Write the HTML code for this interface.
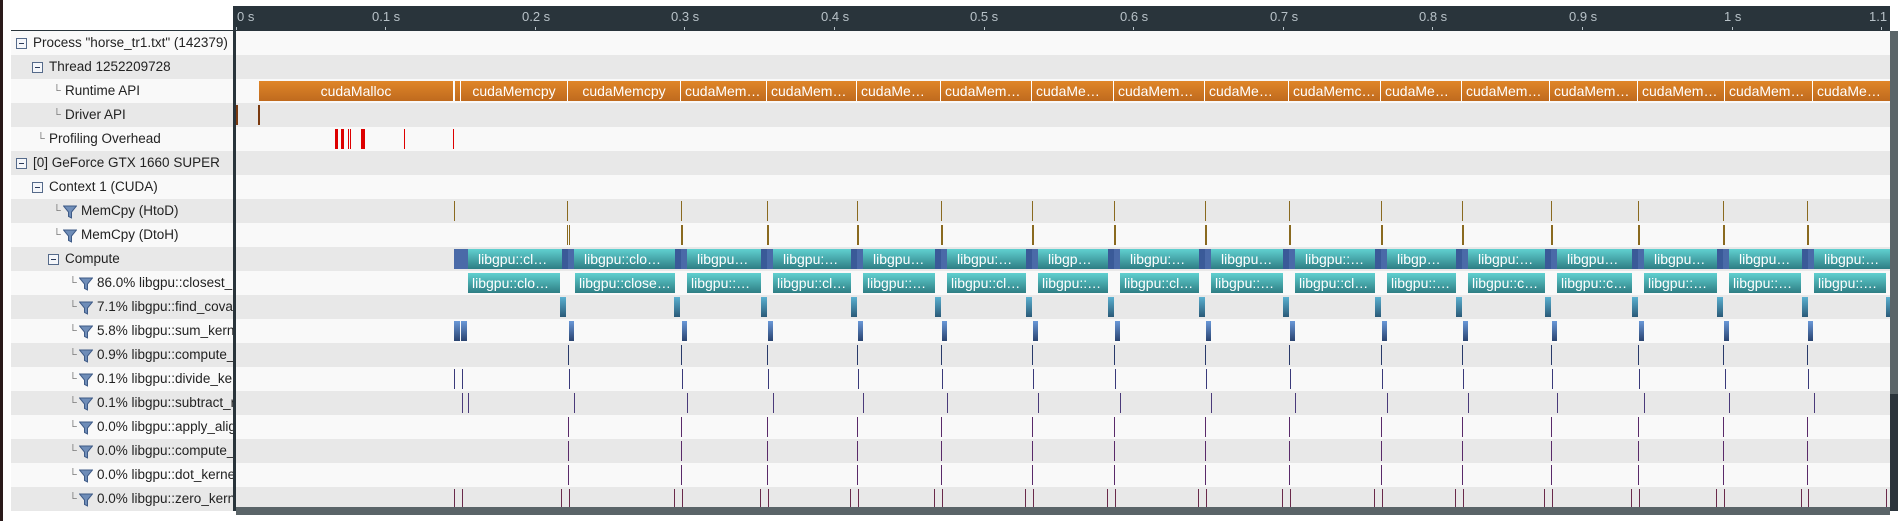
<!DOCTYPE html>
<html><head><meta charset="utf-8"><style>
*{margin:0;padding:0;box-sizing:border-box}
body{width:1903px;height:521px;overflow:hidden;background:#fff;position:relative;font-family:"Liberation Sans","DejaVu Sans",sans-serif;font-size:14px;color:#222}
div{position:absolute}
svg{position:absolute}
.row{left:11px;width:1879px;height:24px}
.l{background:#f9f9f9}.g{background:#e8e8e8}
.t{white-space:nowrap;line-height:24px;height:24px;font-size:13.5px}
.bx{width:11px;height:11px;border:1px solid #556a8a;background:#f4f6fa}
.bx:after{content:"";position:absolute;left:2px;top:4px;width:5px;height:1px;background:#2a3a5a}
.cr{color:#777;font-size:11px}
.rb{top:81px;height:20px;background:linear-gradient(#e08628,#bf6a1e);color:#fff;text-align:center;line-height:20px;overflow:hidden;text-overflow:ellipsis;white-space:nowrap;padding:0 4px;border-right:1px solid #fff}
.cb{top:249px;height:20px;background:linear-gradient(#60d0d0,#2e7e84);color:#fff;line-height:20px;overflow:hidden;text-overflow:ellipsis;white-space:nowrap;padding:0 10px;border-left:6px solid #4a6aa8;border-right:6px solid #3a5a98;text-align:center}
.kb{top:273px;height:20px;background:linear-gradient(#60d0d0,#2e7e84);color:#fff;line-height:20px;overflow:hidden;text-overflow:ellipsis;white-space:nowrap;padding:0 4px;text-align:center}
.fc{top:297px;height:20px;width:6px;background:linear-gradient(#5ab0d0,#2a5a78)}
.sk{top:321px;height:20px;width:5px;background:linear-gradient(#6a98d8,#2a4470)}
.ln{width:1px;height:20px}
.rl{top:3px;white-space:nowrap}
.tk{width:1px;height:3px;background:#b8c2c8;top:21px}
</style></head><body>
<svg width="0" height="0"><defs><symbol id="f" viewBox="0 0 14 14"><path d="M0.5 1 H13.5 L8.5 7 V13 L5.5 11.5 V7 Z" fill="#6f8db8" stroke="#3e5a86" stroke-width="1"/></symbol></defs></svg>
<div style="left:0;top:0;width:3px;height:521px;background:#2a1a1a"></div>
<div style="left:236px;top:6px;width:1654px;height:25px;background:#29343b"></div>
<div style="left:11px;top:30px;width:222px;height:1px;background:#29343b"></div>
<!-- ruler labels -->
<div style="left:0;top:6px;width:1890px;height:25px;color:#b8c2c8;font-size:13px;overflow:hidden">
<div class="rl" style="left:237px">0 s</div>
<div class="rl" style="left:372px">0.1 s</div>
<div class="rl" style="left:522px">0.2 s</div>
<div class="rl" style="left:671px">0.3 s</div>
<div class="rl" style="left:821px">0.4 s</div>
<div class="rl" style="left:970px">0.5 s</div>
<div class="rl" style="left:1120px">0.6 s</div>
<div class="rl" style="left:1270px">0.7 s</div>
<div class="rl" style="left:1419px">0.8 s</div>
<div class="rl" style="left:1569px">0.9 s</div>
<div class="rl" style="left:1724px">1 s</div>
<div class="rl" style="left:1869px">1.1 s</div>
<div class="tk" style="left:236px"></div><div class="tk" style="left:385px"></div><div class="tk" style="left:535px"></div><div class="tk" style="left:684px"></div><div class="tk" style="left:834px"></div><div class="tk" style="left:984px"></div><div class="tk" style="left:1133px"></div><div class="tk" style="left:1283px"></div><div class="tk" style="left:1432px"></div><div class="tk" style="left:1582px"></div><div class="tk" style="left:1732px"></div><div class="tk" style="left:1881px"></div>
</div>
<!-- rows -->
<div class="row l" style="top:31px"></div><div class="row g" style="top:55px"></div>
<div class="row l" style="top:79px"></div><div class="row g" style="top:103px"></div>
<div class="row l" style="top:127px"></div><div class="row g" style="top:151px"></div>
<div class="row l" style="top:175px"></div><div class="row g" style="top:199px"></div>
<div class="row l" style="top:223px"></div><div class="row g" style="top:247px"></div>
<div class="row l" style="top:271px"></div><div class="row g" style="top:295px"></div>
<div class="row l" style="top:319px"></div><div class="row g" style="top:343px"></div>
<div class="row l" style="top:367px"></div><div class="row g" style="top:391px"></div>
<div class="row l" style="top:415px"></div><div class="row g" style="top:439px"></div>
<div class="row l" style="top:463px"></div><div class="row g" style="top:487px"></div>
<div style="left:233px;top:6px;width:3px;height:509px;background:#29343b"></div>
<!-- labels -->
<div style="left:0;top:0;width:233px;height:521px;overflow:hidden">
<div class="bx" style="left:16px;top:38px"></div><div class="t" style="left:33px;top:31px">Process "horse_tr1.txt" (142379)</div>
<div class="bx" style="left:32px;top:62px"></div><div class="t" style="left:49px;top:55px">Thread 1252209728</div>
<div class="t cr" style="left:53px;top:79px">└</div><div class="t" style="left:65px;top:79px">Runtime API</div>
<div class="t cr" style="left:53px;top:103px">└</div><div class="t" style="left:65px;top:103px">Driver API</div>
<div class="t cr" style="left:37px;top:127px">└</div><div class="t" style="left:49px;top:127px">Profiling Overhead</div>
<div class="bx" style="left:16px;top:158px"></div><div class="t" style="left:33px;top:151px">[0] GeForce GTX 1660 SUPER</div>
<div class="bx" style="left:32px;top:182px"></div><div class="t" style="left:49px;top:175px">Context 1 (CUDA)</div>
<div class="t cr" style="left:53px;top:199px">└</div><svg width="14" height="14" style="left:63px;top:205px"><use href="#f"/></svg><div class="t" style="left:81px;top:199px">MemCpy (HtoD)</div>
<div class="t cr" style="left:53px;top:223px">└</div><svg width="14" height="14" style="left:63px;top:229px"><use href="#f"/></svg><div class="t" style="left:81px;top:223px">MemCpy (DtoH)</div>
<div class="bx" style="left:48px;top:254px"></div><div class="t" style="left:65px;top:247px">Compute</div>
<div class="t cr" style="left:69px;top:271px">└</div><svg width="14" height="14" style="left:79px;top:277px"><use href="#f"/></svg><div class="t" style="left:97px;top:271px">86.0% libgpu::closest_k...</div>
<div class="t cr" style="left:69px;top:295px">└</div><svg width="14" height="14" style="left:79px;top:301px"><use href="#f"/></svg><div class="t" style="left:97px;top:295px">7.1% libgpu::find_cova...</div>
<div class="t cr" style="left:69px;top:319px">└</div><svg width="14" height="14" style="left:79px;top:325px"><use href="#f"/></svg><div class="t" style="left:97px;top:319px">5.8% libgpu::sum_kern...</div>
<div class="t cr" style="left:69px;top:343px">└</div><svg width="14" height="14" style="left:79px;top:349px"><use href="#f"/></svg><div class="t" style="left:97px;top:343px">0.9% libgpu::compute_...</div>
<div class="t cr" style="left:69px;top:367px">└</div><svg width="14" height="14" style="left:79px;top:373px"><use href="#f"/></svg><div class="t" style="left:97px;top:367px">0.1% libgpu::divide_ker...</div>
<div class="t cr" style="left:69px;top:391px">└</div><svg width="14" height="14" style="left:79px;top:397px"><use href="#f"/></svg><div class="t" style="left:97px;top:391px">0.1% libgpu::subtract_r...</div>
<div class="t cr" style="left:69px;top:415px">└</div><svg width="14" height="14" style="left:79px;top:421px"><use href="#f"/></svg><div class="t" style="left:97px;top:415px">0.0% libgpu::apply_alig...</div>
<div class="t cr" style="left:69px;top:439px">└</div><svg width="14" height="14" style="left:79px;top:445px"><use href="#f"/></svg><div class="t" style="left:97px;top:439px">0.0% libgpu::compute_...</div>
<div class="t cr" style="left:69px;top:463px">└</div><svg width="14" height="14" style="left:79px;top:469px"><use href="#f"/></svg><div class="t" style="left:97px;top:463px">0.0% libgpu::dot_kerne...</div>
<div class="t cr" style="left:69px;top:487px">└</div><svg width="14" height="14" style="left:79px;top:493px"><use href="#f"/></svg><div class="t" style="left:97px;top:487px">0.0% libgpu::zero_kern...</div>
</div>
<!-- runtime -->
<div class="rb" style="left:259px;width:195px">cudaMalloc</div>
<div class="rb" style="left:455px;width:6px;padding:0"></div>
<div class="rb" style="left:461px;width:107px">cudaMemcpy</div>
<div class="rb" style="left:568px;width:113px">cudaMemcpy</div>
<div class="rb" style="left:681px;width:86px">cudaMemcpy</div>
<div class="rb" style="left:767px;width:90px">cudaMemcpy</div>
<div class="rb" style="left:857px;width:84px">cudaMemcpy</div>
<div class="rb" style="left:941px;width:91px">cudaMemcpy</div>
<div class="rb" style="left:1032px;width:82px">cudaMemcpy</div>
<div class="rb" style="left:1114px;width:91px">cudaMemcpy</div>
<div class="rb" style="left:1205px;width:84px">cudaMemcpy</div>
<div class="rb" style="left:1289px;width:92px">cudaMemcpy</div>
<div class="rb" style="left:1381px;width:81px">cudaMemcpy</div>
<div class="rb" style="left:1462px;width:88px">cudaMemcpy</div>
<div class="rb" style="left:1550px;width:88px">cudaMemcpy</div>
<div class="rb" style="left:1638px;width:87px">cudaMemcpy</div>
<div class="rb" style="left:1725px;width:88px">cudaMemcpy</div>
<div class="rb" style="left:1813px;width:77px;border:0">cudaMemcpy</div>
<!-- driver -->
<div style="left:236px;top:105px;width:2px;height:20px;background:#7a3a10"></div>
<div style="left:258px;top:105px;width:2px;height:20px;background:#7a3a10"></div>
<!-- profiling -->
<div style="left:335px;top:129px;width:3px;height:20px;background:#dd0000"></div>
<div style="left:341px;top:129px;width:3px;height:20px;background:#dd0000"></div>
<div style="left:348px;top:129px;width:1px;height:20px;background:#dd0000"></div>
<div style="left:350px;top:129px;width:1px;height:20px;background:#dd0000"></div>
<div style="left:361px;top:129px;width:4px;height:20px;background:#dd0000"></div>
<div style="left:404px;top:129px;width:1px;height:20px;background:#dd0000"></div>
<div style="left:453px;top:129px;width:1px;height:20px;background:#dd0000"></div>
<!-- HtoD / DtoH -->
<div style="left:0;top:201px;width:1903px;height:20px">
<div class="ln" style="left:454px;background:#8a6a20"></div><div class="ln" style="left:567px;background:#8a6a20"></div><div class="ln" style="left:681px;background:#8a6a20"></div><div class="ln" style="left:767px;background:#8a6a20"></div><div class="ln" style="left:857px;background:#8a6a20"></div><div class="ln" style="left:941px;background:#8a6a20"></div><div class="ln" style="left:1032px;background:#8a6a20"></div><div class="ln" style="left:1114px;background:#8a6a20"></div><div class="ln" style="left:1205px;background:#8a6a20"></div><div class="ln" style="left:1289px;background:#8a6a20"></div><div class="ln" style="left:1381px;background:#8a6a20"></div><div class="ln" style="left:1462px;background:#8a6a20"></div><div class="ln" style="left:1551px;background:#8a6a20"></div><div class="ln" style="left:1638px;background:#8a6a20"></div><div class="ln" style="left:1723px;background:#8a6a20"></div><div class="ln" style="left:1807px;background:#8a6a20"></div>
</div>
<div style="left:0;top:225px;width:1903px;height:20px">
<div class="ln" style="left:567px;background:#8a6a20"></div><div class="ln" style="left:569px;background:#8a6a20"></div><div class="ln" style="left:681px;width:2px;background:#8a6a20"></div><div class="ln" style="left:767px;width:2px;background:#8a6a20"></div><div class="ln" style="left:857px;width:2px;background:#8a6a20"></div><div class="ln" style="left:941px;width:2px;background:#8a6a20"></div><div class="ln" style="left:1032px;width:2px;background:#8a6a20"></div><div class="ln" style="left:1114px;width:2px;background:#8a6a20"></div><div class="ln" style="left:1205px;width:2px;background:#8a6a20"></div><div class="ln" style="left:1289px;width:2px;background:#8a6a20"></div><div class="ln" style="left:1381px;width:2px;background:#8a6a20"></div><div class="ln" style="left:1462px;width:2px;background:#8a6a20"></div><div class="ln" style="left:1551px;width:2px;background:#8a6a20"></div><div class="ln" style="left:1638px;width:2px;background:#8a6a20"></div><div class="ln" style="left:1723px;width:2px;background:#8a6a20"></div><div class="ln" style="left:1807px;width:2px;background:#8a6a20"></div>
</div>
<!-- compute -->
<div class="cb" style="left:454px;width:114px;border-left:14px solid #4a6aa8">libgpu::closest_kernel</div>
<div class="cb" style="left:568px;width:113px">libgpu::closest_kernel</div>
<div class="cb" style="left:681px;width:86px">libgpu::closest_kernel</div>
<div class="cb" style="left:767px;width:90px">libgpu::closest_kernel</div>
<div class="cb" style="left:857px;width:84px">libgpu::closest_kernel</div>
<div class="cb" style="left:941px;width:91px">libgpu::closest_kernel</div>
<div class="cb" style="left:1032px;width:82px">libgpu::closest_kernel</div>
<div class="cb" style="left:1114px;width:91px">libgpu::closest_kernel</div>
<div class="cb" style="left:1205px;width:84px">libgpu::closest_kernel</div>
<div class="cb" style="left:1289px;width:92px">libgpu::closest_kernel</div>
<div class="cb" style="left:1381px;width:81px">libgpu::closest_kernel</div>
<div class="cb" style="left:1462px;width:89px">libgpu::closest_kernel</div>
<div class="cb" style="left:1551px;width:87px">libgpu::closest_kernel</div>
<div class="cb" style="left:1638px;width:85px">libgpu::closest_kernel</div>
<div class="cb" style="left:1723px;width:85px">libgpu::closest_kernel</div>
<div class="cb" style="left:1808px;width:82px;border-right:0">libgpu::closest_kernel</div>
<!-- 86% -->
<div class="kb" style="left:468px;width:92px">libgpu::closest_kernel</div>
<div class="kb" style="left:575px;width:100px">libgpu::closest_kernel</div>
<div class="kb" style="left:687px;width:74px">libgpu::closest_kernel</div>
<div class="kb" style="left:773px;width:78px">libgpu::closest_kernel</div>
<div class="kb" style="left:863px;width:72px">libgpu::closest_kernel</div>
<div class="kb" style="left:947px;width:79px">libgpu::closest_kernel</div>
<div class="kb" style="left:1038px;width:70px">libgpu::closest_kernel</div>
<div class="kb" style="left:1120px;width:79px">libgpu::closest_kernel</div>
<div class="kb" style="left:1211px;width:72px">libgpu::closest_kernel</div>
<div class="kb" style="left:1295px;width:80px">libgpu::closest_kernel</div>
<div class="kb" style="left:1387px;width:69px">libgpu::closest_kernel</div>
<div class="kb" style="left:1468px;width:77px">libgpu::closest_kernel</div>
<div class="kb" style="left:1557px;width:75px">libgpu::closest_kernel</div>
<div class="kb" style="left:1644px;width:73px">libgpu::closest_kernel</div>
<div class="kb" style="left:1729px;width:72px">libgpu::closest_kernel</div>
<div class="kb" style="left:1814px;width:72px">libgpu::closest_kernel</div>
<!-- find_cova -->
<div class="fc" style="left:560px"></div><div class="fc" style="left:674px"></div><div class="fc" style="left:761px"></div><div class="fc" style="left:851px"></div><div class="fc" style="left:935px"></div><div class="fc" style="left:1026px"></div><div class="fc" style="left:1108px"></div><div class="fc" style="left:1199px"></div><div class="fc" style="left:1283px"></div><div class="fc" style="left:1375px"></div><div class="fc" style="left:1456px"></div><div class="fc" style="left:1545px"></div><div class="fc" style="left:1632px"></div><div class="fc" style="left:1717px"></div><div class="fc" style="left:1802px"></div><div class="fc" style="left:1886px;width:4px"></div>
<!-- sum -->
<div class="sk" style="left:454px;width:6px"></div><div class="sk" style="left:461px;width:6px"></div>
<div class="sk" style="left:569px"></div><div class="sk" style="left:682px"></div><div class="sk" style="left:768px"></div><div class="sk" style="left:858px"></div><div class="sk" style="left:942px"></div><div class="sk" style="left:1033px"></div><div class="sk" style="left:1115px"></div><div class="sk" style="left:1206px"></div><div class="sk" style="left:1290px"></div><div class="sk" style="left:1382px"></div><div class="sk" style="left:1463px"></div><div class="sk" style="left:1552px"></div><div class="sk" style="left:1639px"></div><div class="sk" style="left:1724px"></div><div class="sk" style="left:1808px"></div>
<!-- thin lines rows -->
<div style="left:0;top:345px;width:1903px;height:20px">
<div class="ln" style="left:568px;background:#2a3a6a"></div><div class="ln" style="left:681px;background:#2a3a6a"></div><div class="ln" style="left:767px;background:#2a3a6a"></div><div class="ln" style="left:857px;background:#2a3a6a"></div><div class="ln" style="left:941px;background:#2a3a6a"></div><div class="ln" style="left:1032px;background:#2a3a6a"></div><div class="ln" style="left:1114px;background:#2a3a6a"></div><div class="ln" style="left:1205px;background:#2a3a6a"></div><div class="ln" style="left:1289px;background:#2a3a6a"></div><div class="ln" style="left:1381px;background:#2a3a6a"></div><div class="ln" style="left:1462px;background:#2a3a6a"></div><div class="ln" style="left:1551px;background:#2a3a6a"></div><div class="ln" style="left:1638px;background:#2a3a6a"></div><div class="ln" style="left:1723px;background:#2a3a6a"></div><div class="ln" style="left:1807px;background:#2a3a6a"></div>
</div>
<div style="left:0;top:369px;width:1903px;height:20px">
<div class="ln" style="left:454px;background:#3a3a7a"></div><div class="ln" style="left:462px;background:#3a3a7a"></div><div class="ln" style="left:569px;background:#3a3a7a"></div><div class="ln" style="left:682px;background:#3a3a7a"></div><div class="ln" style="left:768px;background:#3a3a7a"></div><div class="ln" style="left:858px;background:#3a3a7a"></div><div class="ln" style="left:942px;background:#3a3a7a"></div><div class="ln" style="left:1033px;background:#3a3a7a"></div><div class="ln" style="left:1115px;background:#3a3a7a"></div><div class="ln" style="left:1206px;background:#3a3a7a"></div><div class="ln" style="left:1290px;background:#3a3a7a"></div><div class="ln" style="left:1382px;background:#3a3a7a"></div><div class="ln" style="left:1463px;background:#3a3a7a"></div><div class="ln" style="left:1552px;background:#3a3a7a"></div><div class="ln" style="left:1639px;background:#3a3a7a"></div><div class="ln" style="left:1725px;background:#3a3a7a"></div><div class="ln" style="left:1808px;background:#3a3a7a"></div>
</div>
<div style="left:0;top:393px;width:1903px;height:20px">
<div class="ln" style="left:462px;background:#4a3a7a"></div><div class="ln" style="left:468px;background:#4a3a7a"></div><div class="ln" style="left:574px;background:#4a3a7a"></div><div class="ln" style="left:687px;background:#4a3a7a"></div><div class="ln" style="left:773px;background:#4a3a7a"></div><div class="ln" style="left:863px;background:#4a3a7a"></div><div class="ln" style="left:947px;background:#4a3a7a"></div><div class="ln" style="left:1038px;background:#4a3a7a"></div><div class="ln" style="left:1120px;background:#4a3a7a"></div><div class="ln" style="left:1211px;background:#4a3a7a"></div><div class="ln" style="left:1295px;background:#4a3a7a"></div><div class="ln" style="left:1387px;background:#4a3a7a"></div><div class="ln" style="left:1468px;background:#4a3a7a"></div><div class="ln" style="left:1557px;background:#4a3a7a"></div><div class="ln" style="left:1644px;background:#4a3a7a"></div><div class="ln" style="left:1729px;background:#4a3a7a"></div><div class="ln" style="left:1814px;background:#4a3a7a"></div>
</div>
<div style="left:0;top:417px;width:1903px;height:68px">
<div class="ln" style="left:568px;height:68px;background:repeating-linear-gradient(#5a2a6a 0 20px,transparent 20px 24px)"></div><div class="ln" style="left:681px;height:68px;background:repeating-linear-gradient(#5a2a6a 0 20px,transparent 20px 24px)"></div><div class="ln" style="left:767px;height:68px;background:repeating-linear-gradient(#5a2a6a 0 20px,transparent 20px 24px)"></div><div class="ln" style="left:857px;height:68px;background:repeating-linear-gradient(#5a2a6a 0 20px,transparent 20px 24px)"></div><div class="ln" style="left:941px;height:68px;background:repeating-linear-gradient(#5a2a6a 0 20px,transparent 20px 24px)"></div><div class="ln" style="left:1032px;height:68px;background:repeating-linear-gradient(#5a2a6a 0 20px,transparent 20px 24px)"></div><div class="ln" style="left:1114px;height:68px;background:repeating-linear-gradient(#5a2a6a 0 20px,transparent 20px 24px)"></div><div class="ln" style="left:1205px;height:68px;background:repeating-linear-gradient(#5a2a6a 0 20px,transparent 20px 24px)"></div><div class="ln" style="left:1289px;height:68px;background:repeating-linear-gradient(#5a2a6a 0 20px,transparent 20px 24px)"></div><div class="ln" style="left:1381px;height:68px;background:repeating-linear-gradient(#5a2a6a 0 20px,transparent 20px 24px)"></div><div class="ln" style="left:1462px;height:68px;background:repeating-linear-gradient(#5a2a6a 0 20px,transparent 20px 24px)"></div><div class="ln" style="left:1551px;height:68px;background:repeating-linear-gradient(#5a2a6a 0 20px,transparent 20px 24px)"></div><div class="ln" style="left:1638px;height:68px;background:repeating-linear-gradient(#5a2a6a 0 20px,transparent 20px 24px)"></div><div class="ln" style="left:1723px;height:68px;background:repeating-linear-gradient(#5a2a6a 0 20px,transparent 20px 24px)"></div><div class="ln" style="left:1807px;height:68px;background:repeating-linear-gradient(#5a2a6a 0 20px,transparent 20px 24px)"></div>
</div>
<div style="left:0;top:489px;width:1903px;height:18px">
<div class="ln" style="left:454px;background:#6a2a4a"></div><div class="ln" style="left:462px;background:#6a2a4a"></div><div class="ln" style="left:561px;background:#6a2a4a"></div><div class="ln" style="left:569px;background:#6a2a4a"></div><div class="ln" style="left:674px;background:#6a2a4a"></div><div class="ln" style="left:682px;background:#6a2a4a"></div><div class="ln" style="left:760px;background:#6a2a4a"></div><div class="ln" style="left:768px;background:#6a2a4a"></div><div class="ln" style="left:850px;background:#6a2a4a"></div><div class="ln" style="left:858px;background:#6a2a4a"></div><div class="ln" style="left:934px;background:#6a2a4a"></div><div class="ln" style="left:942px;background:#6a2a4a"></div><div class="ln" style="left:1025px;background:#6a2a4a"></div><div class="ln" style="left:1033px;background:#6a2a4a"></div><div class="ln" style="left:1107px;background:#6a2a4a"></div><div class="ln" style="left:1115px;background:#6a2a4a"></div><div class="ln" style="left:1198px;background:#6a2a4a"></div><div class="ln" style="left:1206px;background:#6a2a4a"></div><div class="ln" style="left:1282px;background:#6a2a4a"></div><div class="ln" style="left:1290px;background:#6a2a4a"></div><div class="ln" style="left:1374px;background:#6a2a4a"></div><div class="ln" style="left:1382px;background:#6a2a4a"></div><div class="ln" style="left:1455px;background:#6a2a4a"></div><div class="ln" style="left:1463px;background:#6a2a4a"></div><div class="ln" style="left:1544px;background:#6a2a4a"></div><div class="ln" style="left:1552px;background:#6a2a4a"></div><div class="ln" style="left:1631px;background:#6a2a4a"></div><div class="ln" style="left:1639px;background:#6a2a4a"></div><div class="ln" style="left:1716px;background:#6a2a4a"></div><div class="ln" style="left:1724px;background:#6a2a4a"></div><div class="ln" style="left:1801px;background:#6a2a4a"></div><div class="ln" style="left:1808px;background:#6a2a4a"></div><div class="ln" style="left:1886px;background:#6a2a4a"></div>
</div>
<!-- scrollbars -->
<div style="left:1890px;top:31px;width:8px;height:363px;background:#5b6569"></div>
<div style="left:1890px;top:394px;width:8px;height:121px;background:#2b343b"></div>
<div style="left:11px;top:511px;width:1890px;height:10px;background:#fff"></div>
<div style="left:236px;top:507px;width:1654px;height:8px;background:#5a6468"></div>
</body></html>
